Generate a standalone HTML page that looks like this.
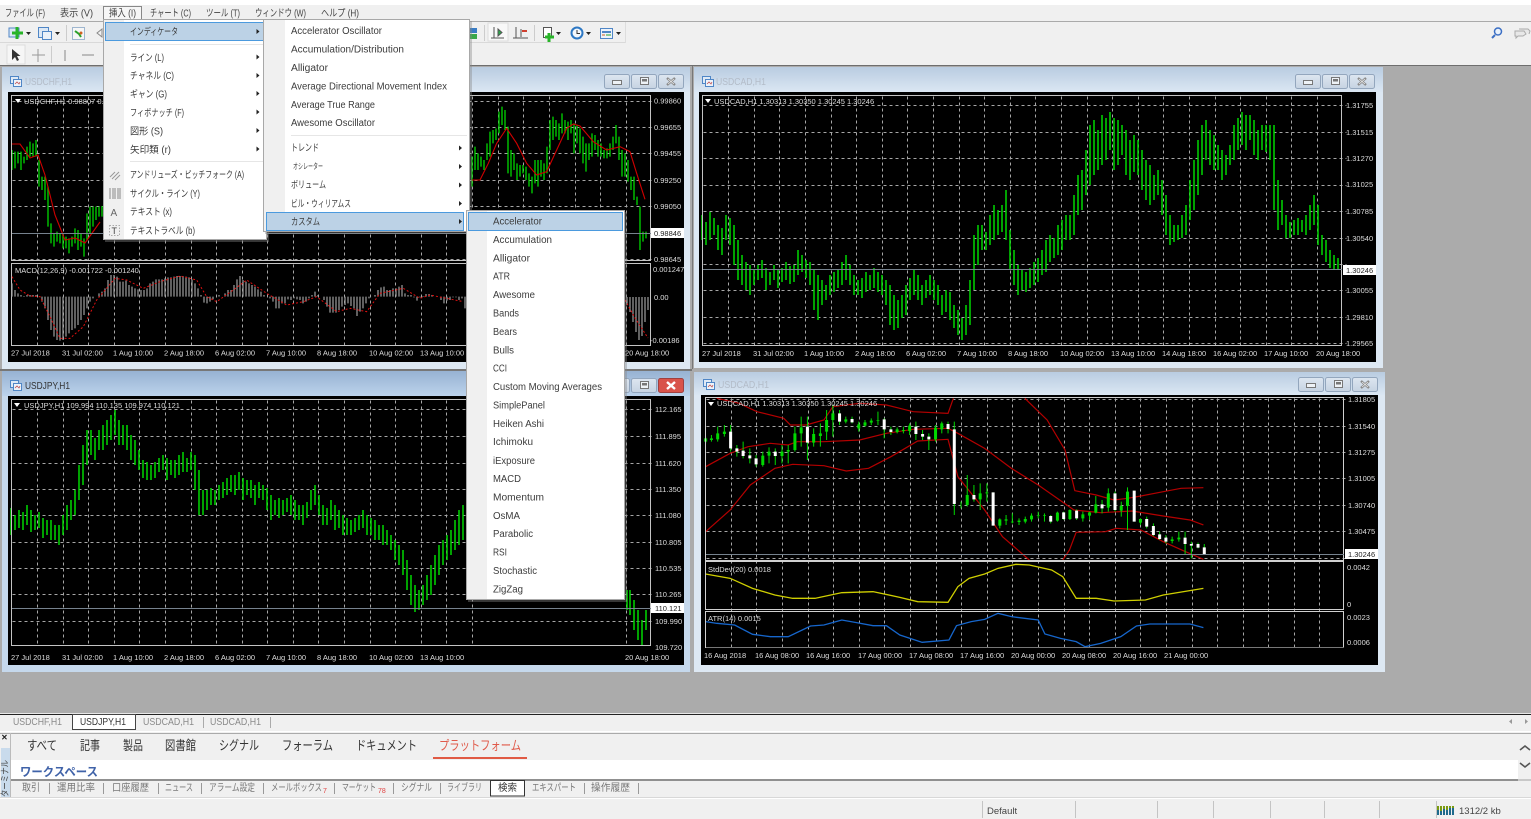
<!DOCTYPE html>
<html><head><meta charset="utf-8"><title>MetaTrader</title>
<style>
html,body{margin:0;padding:0;background:#f0f0f0;overflow:hidden}
svg{display:block;filter:blur(.35px);font-family:"Liberation Sans","Noto Sans CJK JP",sans-serif}
.v{vector-effect:non-scaling-stroke;fill:none}
.g{stroke:#a6a6a6;stroke-width:1;stroke-dasharray:3 3;fill:none}
.p{font-size:7.5px;fill:#ddd}
.mt{font-size:9.8px;fill:#3c3c3c}
.bt{font-size:10px;fill:#777}
.mb{font-size:10px;fill:#444}
.tt{font-size:13px;fill:#333}
.tl{font-size:10.5px;fill:#b3bcc8}
</style></head><body>
<svg xmlns="http://www.w3.org/2000/svg" width="1531" height="819" viewBox="0 0 1531 819">
<defs>
<linearGradient id="gi" x1="0" y1="0" x2="0" y2="1"><stop offset="0" stop-color="#b9cce1"/><stop offset="1" stop-color="#dbe7f3"/></linearGradient>
<linearGradient id="ga" x1="0" y1="0" x2="0" y2="1"><stop offset="0" stop-color="#97b2d2"/><stop offset="1" stop-color="#bcd3ec"/></linearGradient>
<linearGradient id="gb" x1="0" y1="0" x2="0" y2="1"><stop offset="0" stop-color="#dde6f0"/><stop offset="1" stop-color="#c6d3e2"/></linearGradient>
<g id="btn">
<rect x=".5" y=".5" width="25" height="14" rx="2" fill="url(#gb)" stroke="#93a6bd"/>
<rect x="8.5" y="6.5" width="9" height="4" fill="#eef2f6" stroke="#777"/>
<rect x="27.5" y=".5" width="25" height="14" rx="2" fill="url(#gb)" stroke="#93a6bd"/>
<rect x="36.5" y="3.5" width="8" height="7" fill="#eef2f6" stroke="#777"/><rect x="38" y="5" width="5" height="2.5" fill="#777"/>
</g>
<g id="cls">
<rect x="54.5" y=".5" width="25" height="14" rx="2" fill="url(#gb)" stroke="#93a6bd"/>
<path d="M63 4l8 7M71 4l-8 7" stroke="#8a8a8a" stroke-width="2.400" fill="none"/>
<path d="M64 5l6 5M70 5l-6 5" stroke="#f2f2f2" stroke-width=".7" fill="none"/>
</g>
<g id="ic"><rect x=".5" y=".5" width="8" height="7" fill="#dfeaf6" stroke="#4f86c6"/><rect x="3.5" y="3.5" width="8" height="7" fill="#eef4fb" stroke="#4f86c6"/><path d="M5 8l2-2 2 2 1-2" stroke="#c05050" fill="none" stroke-width=".8"/></g>
</defs>

<!-- top chrome -->
<rect width="1531" height="5" fill="#fff"/>
<rect y="5" width="1531" height="60" fill="#f0f0f0"/>
<rect y="21" width="1531" height="1" fill="#aaa"/>
<rect y="42" width="626" height="1" fill="#d9d9d9"/>
<rect x="625" y="22" width="1" height="21" fill="#ddd"/>
<rect y="65" width="1531" height="1" fill="#6e6e6e"/>

<!-- toolbar icons -->
<g>
<path d="M9 28h10v9h-10z" fill="#dce8f5" stroke="#4f86c6"/>
<path d="M17 27v12M12 33h11" stroke="#28b428" stroke-width="3" fill="none"/>
<path d="M26 32h5l-2.500 3z" fill="#222"/>
<rect x="38.500" y="27.500" width="10" height="10" fill="#dce8f5" stroke="#4f86c6"/><rect x="42.500" y="31.500" width="9" height="8" fill="#e9f0f8" stroke="#4f86c6"/>
<path d="M55 32h5l-2.500 3z" fill="#222"/>
<rect x="66" y="25" width="1" height="16" fill="#ccc"/>
<rect x="72.500" y="27.500" width="12" height="12" fill="#f6f6f6" stroke="#9fb6cf"/><path d="M75 31l4 3 2 3" stroke="#2aa02a" stroke-width="2" fill="none"/><circle cx="81" cy="33" r="1.500" fill="#d06020"/>
<path d="M97 33l5-4v8z" fill="none" stroke="#888"/>
<rect x="469" y="28" width="8" height="5" fill="#3a7cc4"/><rect x="469" y="34" width="8" height="5" fill="#3aa84a"/>
<rect x="484" y="25" width="1" height="16" fill="#ccc"/>
<rect x="488" y="23" width="20" height="18" fill="#f8f8f8" stroke="#ddd"/>
<path d="M494 27v11M491 38h13M498 29v7l4-3.500z" stroke="#555" fill="#2aa84a" stroke-width="1"/>
<path d="M516 27v11M513 38h15M521 29v8" stroke="#555" fill="none"/><path d="M522 31h5" stroke="#d04030" stroke-width="2"/>
<rect x="534" y="25" width="1" height="16" fill="#ccc"/>
<rect x="543.500" y="27.500" width="8" height="10" fill="#fff" stroke="#555"/>
<path d="M549 33v9M545 37h9" stroke="#28b428" stroke-width="3"/>
<path d="M556 32h5l-2.500 3z" fill="#222"/>
<circle cx="577" cy="33" r="5.500" fill="#f4f8fc" stroke="#2d78c4" stroke-width="2"/><path d="M577 30v3.500h3" stroke="#333" fill="none"/>
<path d="M586 32h5l-2.500 3z" fill="#222"/>
<rect x="600.500" y="28.500" width="12" height="10" fill="#eef3fa" stroke="#4f86c6"/><path d="M602 32h9" stroke="#4f86c6" stroke-width="2"/><path d="M602 35h3" stroke="#d06020"/><path d="M606 35h5" stroke="#28a028"/>
<path d="M616 32h5l-2.500 3z" fill="#222"/>
<circle cx="1498" cy="31.500" r="3.500" fill="#eaf2fb" stroke="#3c6fc4" stroke-width="1.500"/><path d="M1495 35l-3 3" stroke="#3c6fc4" stroke-width="2"/>
<path d="M1515 31h9l2 3-3 2h-5l-2 2v-2h-1zM1519 29h9l2 2-1 3" fill="#e8e8e8" stroke="#aaa"/>
<rect x="7" y="45" width="18" height="19" fill="#f6f6f6" stroke="#ddd"/>
<path d="M12 49v11l3-3 2 4 2-1-2-4h3.500z" fill="#333"/>
<path d="M38 49v13M32 55h13" stroke="#999"/><rect x="51" y="46" width="1" height="17" fill="#ccc"/>
<path d="M65 50v11" stroke="#888"/><path d="M82 55h12" stroke="#888"/>
</g>

<!-- menu bar -->
<g class="mb">
<text x="5" y="16.500" textLength="40" lengthAdjust="spacingAndGlyphs">ファイル (F)</text>
<text x="60" y="16.500" textLength="33" lengthAdjust="spacingAndGlyphs">表示 (V)</text>
<rect x="103.500" y="6.500" width="38" height="14" fill="#f6f6f6" stroke="#888"/>
<text x="109" y="16.500" textLength="27" lengthAdjust="spacingAndGlyphs">挿入 (I)</text>
<text x="150" y="16.500" textLength="41" lengthAdjust="spacingAndGlyphs">チャート (C)</text>
<text x="206" y="16.500" textLength="34" lengthAdjust="spacingAndGlyphs">ツール (T)</text>
<text x="255" y="16.500" textLength="51" lengthAdjust="spacingAndGlyphs">ウィンドウ (W)</text>
<text x="321" y="16.500" textLength="38" lengthAdjust="spacingAndGlyphs">ヘルプ (H)</text>
</g>

<!-- MDI background -->
<rect y="66" width="1531" height="647" fill="#ababab"/>

<!-- Window 1 USDCHF -->
<rect x="2" y="67" width="688" height="302" fill="#dde8f3"/>
<rect x="2" y="67" width="688" height="25" fill="url(#gi)"/>
<use href="#ic" x="10" y="76"/>
<text class="tl" x="25" y="85" textLength="47" lengthAdjust="spacingAndGlyphs">USDCHF,H1</text>
<use href="#btn" x="604" y="74"/><use href="#cls" x="604" y="74"/>
<rect x="8" y="92" width="676" height="270" fill="#000"/>
<g transform="translate(.5 .5)">
<path class="g" d="M37 96V260M63 96V260M88 96V260M114 96V260M139 96V260M165 96V260M191 96V260M216 96V260M242 96V260M267 96V260M293 96V260M318 96V260M344 96V260M370 96V260M395 96V260M421 96V260M446 96V260M472 96V260M498 96V260M523 96V260M549 96V260M575 96V260M600 96V260M626 96V260"/>
<path class="g" d="M37 264V345M63 264V345M88 264V345M114 264V345M139 264V345M165 264V345M191 264V345M216 264V345M242 264V345M267 264V345M293 264V345M318 264V345M344 264V345M370 264V345M395 264V345M421 264V345M446 264V345M472 264V345M498 264V345M523 264V345M549 264V345M575 264V345M600 264V345M626 264V345"/>
<path class="g" d="M12 101H654M12 127H654M12 153H654M12 180H654M12 206H654M12 259H654"/>
</g>
<g transform="scale(.33333)">
<path class="v" stroke="#00d800" stroke-width="1.300" d="M36 450V510M45 455V505M54 455V490M63 455V510M72 470V490M81 440V480M90 425V470M99 430V470M108 420V470M117 480V560M126 530V570M135 530V600M144 560V680M153 670V730M162 700V740M171 695V725M180 700V730M189 700V745M198 710V745M207 715V760M216 710V740M225 685V730M234 690V750M243 700V740M252 715V770M261 640V720M270 620V700M279 620V680M288 620V660M297 620V650M306 618V650"/>
</g>
<g transform="translate(460 0) scale(.33333)">
<path class="v" stroke="#00d800" stroke-width="1.300" d="M36 470V560M45 440V510M54 460V510M63 470V500M72 480V510M81 430V480M90 395V470M99 390V430M108 385V420M117 335V400M126 320V375M135 330V390M144 380V520M153 450V530M162 460V510M171 490V540M180 495V530M189 495V520M198 500V540M207 520V560M216 530V580M225 480V550M234 480V560M243 480V530M252 490V540M261 440V520M270 360V450M279 350V420M288 360V410M297 370V420M306 340V400M315 360V400M324 365V420M333 360V400M342 370V460M351 375V430M360 385V460M369 410V490M378 430V515M387 430V480M396 400V470M405 405V450M414 420V470M423 430V470M432 450V475M441 445V475M450 430V470M459 410V450M468 375V430M477 410V480M486 450V530M495 460V530M504 480V545M513 530V570M522 530V600M531 590V615M540 620V750M549 695V725M558 695V715"/>
<polyline class="v" stroke="#d00000" stroke-width="1.100" points="35,540 60,540 85,490 110,430 140,385 170,430 200,490 230,525 260,515 290,450 320,385 340,372 360,378 400,425 440,450 480,440 510,455 530,520 555,598"/>
</g>
<polyline fill="none" stroke="#d00000" stroke-width="1.100" points="11,144 20,144 30,158 38,155 45,175 55,215 65,240 75,238 85,243 100,222"/>
<rect x="11.500" y="95.500" width="639" height="165" fill="none" stroke="#c4c4c4"/>
<rect x="11.500" y="263.500" width="639" height="82" fill="none" stroke="#c4c4c4"/>
<path d="M12 233.500H651" stroke="#76828e"/>
<path d="M15 99l6 0-3 4z" fill="#fff"/>
<text class="p" x="24" y="104">USDCHF,H1  0.98807 0.98860 0.98789 0.98846</text>
<g transform="translate(0 240) scale(.33333)">
<path class="v" stroke="#a0a0a0" stroke-width="1.200" d="M36 170V130M45 170V150M54 170V160M63 170V165M72 170V168M81 170V165M90 170V165M99 170V165M108 170V165M126 170V185M135 170V205M144 170V240M153 170V270M162 170V290M171 170V300M180 170V302M189 170V300M198 170V290M207 170V280M216 170V270M225 170V265M234 170V255M243 170V240M252 170V225M261 170V205M270 170V185M279 170V175M297 170V160M306 170V155M315 170V145M324 170V120M333 170V105M342 170V105M351 170V110M360 170V125M369 170V125M378 170V122M387 170V135M396 170V140M405 170V145M414 170V148M423 170V150M432 170V150M441 170V145M450 170V130M459 170V125M468 170V118M477 170V118M486 170V118M495 170V115M504 170V112M513 170V112M522 170V110M531 170V108M540 170V108M549 170V108M558 170V110M567 170V112M576 170V118M585 170V130M594 170V145M603 170V165M612 170V188M621 170V190M630 170V185M639 170V178M657 170V165M675 170V160M684 170V150M693 170V150M702 170V135M711 170V118M720 170V108M729 170V120M738 170V125M747 170V130M756 170V135M765 170V140M774 170V148M783 170V155M792 170V165M810 170V175M819 170V185M828 170V205M837 170V205M846 170V190M855 170V190M864 170V178M873 170V180M882 170V175M891 170V178M900 170V180M909 170V190M918 170V185M927 170V175M936 170V165M945 170V155M954 170V165M972 170V180M981 170V200M990 170V218M999 170V218M1008 170V218M1017 170V210M1026 170V200M1035 170V195M1044 170V190M1053 170V198M1062 170V205M1071 170V228M1080 170V215M1089 170V205M1098 170V190M1107 170V175M1125 170V165M1134 170V150M1143 170V142M1152 170V140M1161 170V150M1170 170V150M1179 170V145M1188 170V145M1197 170V140M1206 170V135M1215 170V160M1224 170V165M1233 170V165M1242 170V172M1251 170V182M1260 170V172M1269 170V168M1278 170V162M1287 170V162M1296 170V165M1314 170V170M1323 170V180M1332 170V190M1341 170V182M1350 170V180M1359 170V172M1368 170V172M1377 170V180M1386 170V175M1395 170V205"/>
<polyline class="v" stroke="#e01010" stroke-width="1" stroke-dasharray="2 2" points="36,110 60,150 90,168 120,170 150,230 180,295 210,295 250,260 290,180 345,115 380,120 430,145 480,125 540,108 590,120 620,170 650,185 700,150 740,120 800,160 860,195 910,185 950,170 1010,215 1050,205 1100,215 1140,160 1210,145 1260,175 1290,165 1390,185"/>
</g>
<path d="M627 297V305M630 297V312M633 297V322M636 297V332M639 297V340M642 297V336M645 297V322M648 297V310" stroke="#a0a0a0" stroke-width="1.200"/>
<polyline fill="none" stroke="#e01010" stroke-dasharray="2 2" points="625,300 635,318 648,338"/>
<text class="p" x="15" y="273" fill="#ccc">MACD(12,26,9) -0.001722 -0.001240</text>
<g class="p">
<text x="654" y="103.500">0.99860</text><text x="654" y="130">0.99655</text><text x="654" y="156">0.99455</text><text x="654" y="183">0.99250</text><text x="654" y="209">0.99050</text><text x="654" y="262">0.98645</text>
<text x="653" y="272">0.001247</text><text x="654" y="300">0.00</text><text x="650" y="343">-0.00186</text>
<text x="11" y="355.500">27 Jul 2018</text><text x="62" y="355.500">31 Jul 02:00</text><text x="113" y="355.500">1 Aug 10:00</text><text x="164" y="355.500">2 Aug 18:00</text><text x="215" y="355.500">6 Aug 02:00</text><text x="266" y="355.500">7 Aug 10:00</text><text x="317" y="355.500">8 Aug 18:00</text><text x="369" y="355.500">10 Aug 02:00</text><text x="420" y="355.500">13 Aug 10:00</text><text x="625" y="355.500">20 Aug 18:00</text>
</g>
<rect x="651" y="228" width="33" height="10" fill="#fff"/><text x="654" y="236" font-size="7.500" fill="#222">0.98846</text>

<!-- Window 2 USDJPY -->
<rect x="0" y="369" width="692" height="2" fill="#777"/>
<rect x="2" y="371" width="688" height="301" fill="#c5d8ec"/>
<rect x="2" y="371" width="688" height="25" fill="url(#ga)"/>
<use href="#ic" x="10" y="380"/>
<text x="25" y="389" font-size="10.500" fill="#333" textLength="45" lengthAdjust="spacingAndGlyphs">USDJPY,H1</text>
<use href="#btn" x="604" y="378"/>
<rect x="658.500" y="378.500" width="25" height="14" rx="2" fill="#d9534a" stroke="#a04040"/><path d="M667 382l8 7M675 382l-8 7" stroke="#fff" stroke-width="2.400"/>
<rect x="8" y="396" width="676" height="269" fill="#000"/>
<g transform="translate(.5 .5)">
<path class="g" d="M37 400V645M63 400V645M88 400V645M114 400V645M139 400V645M165 400V645M191 400V645M216 400V645M242 400V645M267 400V645M293 400V645M318 400V645M344 400V645M370 400V645M395 400V645M421 400V645M446 400V645M472 400V645M626 400V645"/>
<path class="g" d="M12 409H654M12 436H654M12 463H654M12 489H654M12 515H654M12 542H654M12 568H654M12 594H654M12 621H654"/>
</g>
<path fill="none" stroke="#00d800" stroke-width="1.500" d="M11 508V535M15 515V530M19 510V528M23 512V530M27 505V525M31 510V532M35 515V530M39 512V528M43 518V538M47 520V535M51 520V540M55 525V540M59 525V545M63 515V535M67 505V530M71 500V520M75 490V515M79 465V500M83 445V485M87 430V465M91 430V455M95 438V460M99 430V450M103 425V450M107 420V445M111 415V440M115 410V435M119 420V445M123 425V445M127 425V450M131 435V460M135 440V465M139 450V470M143 460V478M147 462V480M151 465V480M155 462V478M159 458V472M163 455V470M167 458V480M171 460V475M175 460V478M179 455V475M183 452V472M187 458V472M191 452V470M195 455V490M199 470V515M203 490V515M207 490V510M211 488V505M215 490V505M219 485V500M223 482V498M227 478V495M231 475V492M235 475V495M239 472V490M243 478V500M247 480V495M251 480V498M255 485V505M259 482V498M263 485V500M267 488V510M271 495V520M275 500V515M279 498V518M283 500V515M287 498V512M291 495V515M295 500V520M299 505V520M303 505V525M307 502V518M311 490V510M315 485V505M319 495V515M323 505V525M327 508V525M331 500V520M335 505V530M339 510V528M343 515V535M347 518V535M351 520V535M355 518V532M359 515V530M363 510V528M367 515V535M371 518V535M375 520V540M379 525V540M383 525V545M387 530V545M391 535V550M395 540V560M399 545V565M403 550V575M407 560V590M411 575V605M415 585V612M419 590V610M423 585V605M427 575V600M431 565V595M435 555V585M439 545V575M443 540V565M447 535V560M451 530V555M455 520V550M459 510V545M463 505V540M627 590V610M630 590V615M634 600V630M638 610V640M642 620V645M646 610V630"/>
<rect x="11.500" y="399.500" width="639" height="246" fill="none" stroke="#c4c4c4"/>
<path d="M12 608.500H651" stroke="#76828e"/>
<path d="M14 403l6 0-3 4z" fill="#fff"/>
<text class="p" x="24" y="408">USDJPY,H1  109.994 110.135 109.974 110.121</text>
<g class="p">
<text x="655" y="412">112.165</text><text x="655" y="439">111.895</text><text x="655" y="466">111.620</text><text x="655" y="492">111.350</text><text x="655" y="518">111.080</text><text x="655" y="545">110.805</text><text x="655" y="571">110.535</text><text x="655" y="597">110.265</text><text x="655" y="624">109.990</text><text x="655" y="650">109.720</text>
<text x="11" y="660">27 Jul 2018</text><text x="62" y="660">31 Jul 02:00</text><text x="113" y="660">1 Aug 10:00</text><text x="164" y="660">2 Aug 18:00</text><text x="215" y="660">6 Aug 02:00</text><text x="266" y="660">7 Aug 10:00</text><text x="317" y="660">8 Aug 18:00</text><text x="369" y="660">10 Aug 02:00</text><text x="420" y="660">13 Aug 10:00</text><text x="625" y="660">20 Aug 18:00</text>
</g>
<rect x="651" y="603" width="33" height="10" fill="#fff"/><text x="655" y="611" font-size="7.500" fill="#222">110.121</text>

<!-- Window 3 USDCAD -->
<rect x="692" y="66" width="1" height="303" fill="#777"/>
<rect x="694" y="67" width="689" height="301" fill="#dde8f3"/>
<rect x="694" y="67" width="689" height="25" fill="url(#gi)"/>
<use href="#ic" x="702" y="76"/>
<text class="tl" x="716" y="85" textLength="50" lengthAdjust="spacingAndGlyphs">USDCAD,H1</text>
<use href="#btn" x="1295" y="74"/><use href="#cls" x="1295" y="74"/>
<rect x="699" y="92" width="677" height="270" fill="#000"/>
<g transform="translate(.5 .5)">
<path class="g" d="M728 96V345M754 96V345M779 96V345M805 96V345M831 96V345M856 96V345M882 96V345M907 96V345M933 96V345M959 96V345M984 96V345M1010 96V345M1035 96V345M1061 96V345M1087 96V345M1112 96V345M1138 96V345M1163 96V345M1189 96V345M1215 96V345M1240 96V345M1266 96V345M1291 96V345M1317 96V345"/>
<path class="g" d="M703 105H1346M703 132H1346M703 158H1346M703 185H1346M703 211H1346M703 238H1346M703 264H1346M703 290H1346M703 317H1346M703 343H1346"/>
</g>
<path fill="none" stroke="#00d800" stroke-width="1.500" d="M702 215V240M706 222V245M710 212V240M714 218V235M718 225V250M722 228V255M726 215V240M730 218V245M734 225V265M738 240V280M742 255V285M746 262V290M750 265V295M754 270V285M758 265V280M762 260V278M766 268V290M770 272V285M774 265V280M778 270V288M782 268V282M786 262V280M790 266V284M794 265V282M798 250V275M802 255V272M806 260V278M810 262V285M814 270V310M818 275V320M822 280V305M826 285V300M830 275V295M834 272V292M838 270V288M842 262V285M846 255V280M850 265V285M854 275V295M858 280V295M862 278V298M866 272V292M870 275V290M874 268V288M878 272V292M882 275V295M886 280V305M890 285V325M894 295V330M898 300V328M902 295V318M906 285V315M910 278V300M914 270V295M918 275V300M922 285V305M926 280V298M930 275V295M934 280V300M938 285V305M942 295V315M946 290V312M950 292V320M954 305V328M958 310V335M962 318V340M966 305V335M970 280V325M974 235V290M978 225V265M982 225V250M986 232V250M990 215V245M994 205V240M998 210V235M1002 205V232M1006 190V240M1010 230V270M1014 250V285M1018 265V295M1022 270V290M1026 272V292M1030 268V288M1034 262V285M1038 258V282M1042 250V275M1046 240V272M1050 235V262M1054 238V258M1058 225V255M1062 220V250M1066 215V240M1070 215V240M1074 195V235M1078 175V215M1082 170V210M1086 150V195M1090 125V185M1094 120V175M1098 130V170M1102 115V165M1106 118V160M1110 112V150M1114 118V170M1118 120V165M1122 125V155M1126 130V175M1130 140V180M1134 135V172M1138 140V175M1142 150V190M1146 160V200M1150 165V205M1154 175V200M1158 170V195M1162 180V215M1166 195V235M1170 215V245M1174 225V242M1178 225V240M1182 215V238M1186 205V235M1190 180V220M1194 160V210M1198 140V195M1202 125V175M1206 120V160M1210 130V165M1214 135V170M1218 145V170M1222 150V180M1226 155V175M1230 145V165M1234 125V160M1238 118V150M1242 112V145M1246 115V150M1250 115V140M1254 120V155M1258 130V160M1262 125V150M1266 125V152M1270 125V160M1274 125V210M1278 180V230M1282 200V225M1286 215V238M1290 222V238M1294 220V235M1298 218V235M1302 220V232M1306 215V235M1310 205V230M1314 195V225M1318 205V245M1322 235V255M1326 240V262M1330 250V268M1334 255V270M1338 258V270"/>
<rect x="702.500" y="95.500" width="639" height="250" fill="none" stroke="#c4c4c4"/>
<path d="M703 269.500H1342" stroke="#76828e"/>
<path d="M705 99l6 0-3 4z" fill="#fff"/>
<text class="p" x="714" y="104">USDCAD,H1  1.30313 1.30350 1.30245 1.30246</text>
<g class="p">
<text x="1346" y="108">1.31755</text><text x="1346" y="135">1.31515</text><text x="1346" y="161">1.31270</text><text x="1346" y="187">1.31025</text><text x="1346" y="214">1.30785</text><text x="1346" y="241">1.30540</text><text x="1346" y="293">1.30055</text><text x="1346" y="320">1.29810</text><text x="1346" y="346">1.29565</text>
<text x="702" y="356">27 Jul 2018</text><text x="753" y="356">31 Jul 02:00</text><text x="804" y="356">1 Aug 10:00</text><text x="855" y="356">2 Aug 18:00</text><text x="906" y="356">6 Aug 02:00</text><text x="957" y="356">7 Aug 10:00</text><text x="1008" y="356">8 Aug 18:00</text><text x="1060" y="356">10 Aug 02:00</text><text x="1111" y="356">13 Aug 10:00</text><text x="1162" y="356">14 Aug 18:00</text><text x="1213" y="356">16 Aug 02:00</text><text x="1264" y="356">17 Aug 10:00</text><text x="1316" y="356">20 Aug 18:00</text>
</g>
<rect x="1343" y="265" width="33" height="10" fill="#fff"/><text x="1346" y="273" font-size="7.500" fill="#222">1.30246</text>

<!-- Window 4 USDCAD -->
<rect x="694" y="372" width="691" height="300" fill="#dde8f3"/>
<rect x="694" y="372" width="691" height="23" fill="url(#gi)"/>
<use href="#ic" x="703" y="379"/>
<text class="tl" x="718" y="388" textLength="51" lengthAdjust="spacingAndGlyphs">USDCAD,H1</text>
<use href="#btn" x="1298" y="377"/><use href="#cls" x="1298" y="377"/>
<rect x="701" y="395" width="677" height="270" fill="#000"/>
<g transform="translate(.5 .5)">
<path class="g" d="M731 398V647M756 398V647M782 398V647M808 398V647M833 398V647M859 398V647M884 398V647M910 398V647M936 398V647M961 398V647M987 398V647M1012 398V647M1038 398V647M1064 398V647M1089 398V647M1115 398V647M1140 398V647M1166 398V647M1192 398V647M1217 398V647M1243 398V647M1268 398V647M1294 398V647M1319 398V647"/>
<path class="g" d="M706 399H1348M706 426H1348M706 452H1348M706 478H1348M706 505H1348M706 531H1348M706 558H1348"/>
</g>
<g transform="translate(690 370) scale(.44643 .33333)">
<path class="v" stroke="#b40000" stroke-width="1.200" d="M60 85L110 100 150 125 210 145 225 165 260 165 300 150 320 110 380 100 440 105 500 125 578 130 590 85M750 85L800 150 840 240 862 362 910 375 950 390 980 385 1010 378 1060 365 1100 355 1150 353"/>
<path class="v" stroke="#b40000" stroke-width="1.200" d="M35 290L90 250 130 230 180 220 220 225 240 215 300 215 380 210 440 190 500 178 578 175 600 190 660 235 720 295 780 345 860 420 920 428 990 423 1060 438 1120 450 1150 465"/>
<path class="v" stroke="#b40000" stroke-width="1.200" d="M35 485L90 420 135 345 190 295 230 283 300 287 350 303 400 295 450 260 510 213 578 208 600 320 660 420 700 500 760 570M835 570L850 540 865 487 930 485 955 475 1010 480 1060 515 1110 545 1150 568"/>
<path class="v" stroke="#00d800" stroke-width="1" d="M35 200V220M48 195V215M62 170V215M77 165V200M91 165V245M105 225V260M119 215V265M134 235V280M148 255V290M163 245V290M177 232V280M191 235V285M206 225V280M220 225V280M235 170V245M249 140V230M263 140V270M277 175V230M292 160V230M306 120V210M320 105V200M335 120V165M349 140V160M363 140V160M378 155V185M392 150V170M406 145V165M421 125V165M435 145V205M450 170V195M464 172V190M478 170V190M492 160V195M506 155V210M521 180V210M535 190V240M550 165V215M564 155V190M578 155V190M592 155V435M607 395V415M621 315V410M636 345V395M650 340V420M665 340V395M679 367V467M694 445V475M708 435V465M722 430V460M737 445V465M751 440V460M765 430V455M780 425V445M794 430V455M808 435V460M823 425V455M837 425V450M851 418V450M866 418V450M880 425V455M895 425V450M909 378V430M923 390V430M937 355V425M952 365V425M966 395V440M980 352V480M995 362V455M1009 445V465M1023 440V475M1038 460V498M1052 485V510M1066 495V520M1080 500V520M1095 485V515M1109 485V555M1123 515V565M1138 518V535M1152 522V555"/>
<path class="v" stroke="#00d800" stroke-width="3" d="M35 205V215M48 205V210M62 190V208M77 185V192M163 257V285M177 245V257M206 245V258M220 240V245M235 190V240M249 172V190M277 192V218M292 190V198M306 150V185M320 130V150M349 148V155M378 163V175M392 157V167M406 152V158M421 150V152M464 178V186M478 180V183M492 167V183M550 173V208M564 160V178M621 375V405M650 370V388M665 367V370M694 448V467M708 448V452M722 455V457M737 452V456M751 447V455M765 437V448M780 435V437M794 435V437M823 428V452M851 420V447M880 433V445M895 427V437M909 403V428M937 370V413M966 408V422M980 365V408M1009 447V458M1080 508V513M1095 503V508"/>
<path class="v" stroke="#fff" stroke-width="3" d="M91 185V235M105 235V245M119 242V258M134 256V265M148 265V283M191 245V258M263 170V218M335 130V155M363 147V157M435 148V178M450 178V186M506 170V192M521 192V200M535 200V208M578 162V177M592 178V402M636 375V388M679 367V467M808 438V455M837 427V447M866 422V445M923 403V415M952 370V420M995 362V455M1023 447V470M1038 468V495M1052 493V507M1066 503V515M1109 503V522M1123 522V527M1138 522V533M1152 532V552"/>
<polyline class="v" stroke="#cfcf00" stroke-width="1.300" points="35,612 60,618 90,625 140,655 190,675 230,685 280,685 340,668 410,665 470,682 510,695 578,697 600,650 625,625 660,612 690,595 730,583 760,585 810,600 835,620 865,685 910,685 950,693 1020,690 1060,675 1150,655"/>
<polyline class="v" stroke="#1666cc" stroke-width="1.300" points="35,755 60,760 100,765 140,793 180,800 220,800 270,768 300,765 340,750 370,757 410,767 440,767 470,795 520,817 580,810 597,767 630,755 660,748 690,730 720,740 780,750 795,792 830,805 865,815 885,830 920,820 965,800 1000,768 1030,762 1120,762 1150,773"/>
</g>
<rect x="705.500" y="397.500" width="638" height="163" fill="none" stroke="#d0d0d0"/>
<rect x="705.500" y="561.500" width="638" height="48" fill="none" stroke="#d0d0d0"/>
<rect x="705.500" y="611.500" width="638" height="36" fill="none" stroke="#d0d0d0"/>
<path d="M706 647.500H1344" stroke="#777"/>
<path d="M706 554.500H1344" stroke="#76828e"/>
<path d="M708 402l6 0-3 4z" fill="#fff"/>
<text class="p" x="717" y="406">USDCAD,H1  1.30313 1.30350 1.30245 1.30246</text>
<text class="p" x="708" y="572">StdDev(20) 0.0018</text>
<text class="p" x="708" y="621">ATR(14) 0.0015</text>
<g class="p">
<text x="1348" y="402">1.31805</text><text x="1348" y="429">1.31540</text><text x="1348" y="455">1.31275</text><text x="1348" y="481">1.31005</text><text x="1348" y="508">1.30740</text><text x="1348" y="534">1.30475</text>
<text x="1347" y="570">0.0042</text><text x="1347" y="607">0</text><text x="1347" y="620">0.0023</text><text x="1347" y="645">0.0006</text>
<text x="704" y="658">16 Aug 2018</text><text x="755" y="658">16 Aug 08:00</text><text x="806" y="658">16 Aug 16:00</text><text x="858" y="658">17 Aug 00:00</text><text x="909" y="658">17 Aug 08:00</text><text x="960" y="658">17 Aug 16:00</text><text x="1011" y="658">20 Aug 00:00</text><text x="1062" y="658">20 Aug 08:00</text><text x="1113" y="658">20 Aug 16:00</text><text x="1164" y="658">21 Aug 00:00</text>
</g>
<rect x="1345" y="549" width="33" height="10" fill="#fff"/><text x="1348" y="557" font-size="7.500" fill="#222">1.30246</text>

<!-- chart tab bar -->
<rect y="713" width="1531" height="106" fill="#f0f0f0"/>
<rect y="713" width="1531" height="1" fill="#e8e8e8"/>
<rect y="714" width="1531" height="1" fill="#222"/>
<rect y="731" width="1531" height="1" fill="#fff"/>
<rect x="72.500" y="714.500" width="63" height="15" fill="#fff" stroke="#444"/>
<g font-size="10" fill="#8a8a8a">
<text x="13" y="725" textLength="49" lengthAdjust="spacingAndGlyphs">USDCHF,H1</text>
<text x="80" y="725" fill="#333" textLength="46" lengthAdjust="spacingAndGlyphs">USDJPY,H1</text>
<text x="143" y="725" textLength="51" lengthAdjust="spacingAndGlyphs">USDCAD,H1</text>
<text x="210" y="725" textLength="51" lengthAdjust="spacingAndGlyphs">USDCAD,H1</text>
</g>
<path d="M203.500 717v11M270.500 717v11" stroke="#aaa"/>
<path d="M1512 719l-3 2.500 3 2.500zM1525 719l3 2.500-3 2.500z" fill="#999"/>

<!-- terminal -->
<rect y="733" width="1531" height="1" fill="#aaa"/>
<rect x="1" y="734" width="10" height="63" fill="#f0f0f0"/>
<rect x="1" y="748" width="9" height="49" fill="#c9dbec"/>
<rect x="10" y="733" width="1" height="64" fill="#bbb"/>
<text x="1.500" y="740.500" font-size="10" font-weight="bold" fill="#222">×</text>
<text transform="translate(8 797) rotate(-90)" font-size="9" fill="#444" textLength="37" lengthAdjust="spacingAndGlyphs">ターミナル</text>
<rect x="11" y="760" width="1507" height="19" fill="#fff"/>
<g class="tt">
<text x="27" y="750" textLength="30" lengthAdjust="spacingAndGlyphs">すべて</text>
<text x="80" y="750" textLength="20" lengthAdjust="spacingAndGlyphs">記事</text>
<text x="123" y="750" textLength="20" lengthAdjust="spacingAndGlyphs">製品</text>
<text x="165" y="750" textLength="31" lengthAdjust="spacingAndGlyphs">図書館</text>
<text x="219" y="750" textLength="40" lengthAdjust="spacingAndGlyphs">シグナル</text>
<text x="282" y="750" textLength="51" lengthAdjust="spacingAndGlyphs">フォーラム</text>
<text x="356" y="750" textLength="61" lengthAdjust="spacingAndGlyphs">ドキュメント</text>
<text x="439" y="750" fill="#e05a4a" textLength="82" lengthAdjust="spacingAndGlyphs">プラットフォーム</text>
</g>
<rect x="433" y="757" width="94" height="2" fill="#e05a44"/>
<text x="20" y="776" font-size="12" font-weight="bold" fill="#3f62a8" textLength="78" lengthAdjust="spacingAndGlyphs">ワークスペース</text>
<path d="M1520 750l5-4 5 4" fill="none" stroke="#555" stroke-width="1.600"/>
<path d="M1520 763l5 4 5-4" fill="none" stroke="#555" stroke-width="1.600"/>
<rect x="11" y="779" width="1507" height="2" fill="#909090"/>
<rect x="1518" y="779" width="13" height="2" fill="#c8c8c8"/>
<rect x="490.500" y="780.500" width="34" height="15.500" fill="#fff" stroke="#333"/>
<g class="bt">
<text x="22" y="791" textLength="18" lengthAdjust="spacingAndGlyphs">取引</text>
<text x="57" y="791" textLength="38" lengthAdjust="spacingAndGlyphs">運用比率</text>
<text x="112" y="791" textLength="37" lengthAdjust="spacingAndGlyphs">口座履歴</text>
<text x="165" y="791" textLength="28" lengthAdjust="spacingAndGlyphs">ニュース</text>
<text x="209" y="791" textLength="46" lengthAdjust="spacingAndGlyphs">アラーム設定</text>
<text x="271" y="791" textLength="51" lengthAdjust="spacingAndGlyphs">メールボックス</text>
<text x="323" y="793" font-size="7" fill="#e04040">7</text>
<text x="342" y="791" textLength="34" lengthAdjust="spacingAndGlyphs">マーケット</text>
<text x="378" y="793" font-size="7" fill="#e04040">78</text>
<text x="401" y="791" textLength="31" lengthAdjust="spacingAndGlyphs">シグナル</text>
<text x="447" y="791" textLength="35" lengthAdjust="spacingAndGlyphs">ライブラリ</text>
<text x="498" y="791" fill="#333" textLength="19" lengthAdjust="spacingAndGlyphs">検索</text>
<text x="532" y="791" textLength="44" lengthAdjust="spacingAndGlyphs">エキスパート</text>
<text x="591" y="791" textLength="39" lengthAdjust="spacingAndGlyphs">操作履歴</text>
</g>
<path d="M49.500 783v11M103.500 783v11M158.500 783v11M201.500 783v11M263.500 783v11M334.500 783v11M393.500 783v11M440.500 783v11M584.500 783v11M638.500 783v11" stroke="#999"/>

<!-- status bar -->
<rect y="797" width="1531" height="1" fill="#d8d8d8"/>
<rect y="798" width="1531" height="1" fill="#fff"/>
<path d="M982.500 801v17M1075.500 801v17M1157.500 801v17M1213.500 801v17M1270.500 801v17M1324.500 801v17M1379.500 801v17M1436.500 801v17" stroke="#c4c4c4"/>
<text x="987" y="814" font-size="9.500" fill="#444">Default</text>
<text x="1459" y="814" font-size="9.500" fill="#444">1312/2 kb</text>
<path d="M1438 806v9M1441 806v9M1444 806v9M1447 806v9M1450 806v9M1453 806v9" stroke="#1e6a8c" stroke-width="2"/>
<path d="M1438 806v4M1441 806v5M1444 806v3M1447 806v4M1450 806v2M1453 806v2" stroke="#7a9a10" stroke-width="2"/>

<!-- menu 1 -->
<rect x="105" y="21" width="164" height="221" fill="#888" opacity=".4"/>
<rect x="103.500" y="19.500" width="163" height="220" fill="#fff" stroke="#a8a8a8"/>
<rect x="104" y="20" width="20" height="219" fill="#f0f0f0"/>
<rect x="105.500" y="22.500" width="158" height="18" fill="#bcd2e6" stroke="#4b9ade"/>
<rect x="130" y="44" width="134" height="1" fill="#e6e6e6"/>
<rect x="130" y="161" width="134" height="1" fill="#e6e6e6"/>
<g class="mt">
<text x="130" y="35" textLength="48" lengthAdjust="spacingAndGlyphs">インディケータ</text>
<text x="130" y="61" textLength="34" lengthAdjust="spacingAndGlyphs">ライン (L)</text>
<text x="130" y="79" textLength="44" lengthAdjust="spacingAndGlyphs">チャネル (C)</text>
<text x="130" y="97.500" textLength="37" lengthAdjust="spacingAndGlyphs">ギャン (G)</text>
<text x="130" y="116" textLength="54" lengthAdjust="spacingAndGlyphs">フィボナッチ (F)</text>
<text x="130" y="134.500" textLength="33" lengthAdjust="spacingAndGlyphs">図形 (S)</text>
<text x="130" y="153" textLength="41" lengthAdjust="spacingAndGlyphs">矢印類 (r)</text>
<text x="130" y="178" textLength="114" lengthAdjust="spacingAndGlyphs">アンドリューズ・ピッチフォーク (A)</text>
<text x="130" y="197" textLength="70" lengthAdjust="spacingAndGlyphs">サイクル・ライン (Y)</text>
<text x="130" y="215" textLength="42" lengthAdjust="spacingAndGlyphs">テキスト (x)</text>
<text x="130" y="234" textLength="65" lengthAdjust="spacingAndGlyphs">テキストラベル (b)</text>
</g>
<path d="M256.500 29l3 2.500-3 2.500zM256.500 54.500l3 2.500-3 2.500zM256.500 73l3 2.500-3 2.500zM256.500 91l3 2.500-3 2.500zM256.500 109.500l3 2.500-3 2.500zM256.500 128l3 2.500-3 2.500zM256.500 146.500l3 2.500-3 2.500z" fill="#222"/>
<path d="M110 177l5-5M112 179l7-7M115 180l5-5" stroke="#999" fill="none"/>
<path d="M110 188v11M113 188v11M115 188v11M118 188v11M120 188v11" stroke="#888" fill="none"/>
<text x="110.500" y="216" font-size="10" fill="#666">A</text>
<rect x="109.500" y="225.500" width="10" height="10" fill="none" stroke="#aaa" stroke-dasharray="1.500 1.500"/>
<text x="111.500" y="234" font-size="9" fill="#444">T</text>

<!-- menu 2 -->
<rect x="265" y="21" width="207" height="213" fill="#888" opacity=".4"/>
<rect x="263.500" y="19.500" width="206" height="212" fill="#fff" stroke="#a8a8a8"/>
<rect x="264" y="20" width="21" height="211" fill="#f0f0f0"/>
<rect x="291" y="135" width="176" height="1" fill="#e6e6e6"/>
<rect x="266.500" y="212.500" width="197" height="18" fill="#bcd2e6" stroke="#4b9ade"/>
<g class="mt">
<text x="291" y="34" textLength="91" lengthAdjust="spacingAndGlyphs">Accelerator Oscillator</text>
<text x="291" y="52.500" textLength="113" lengthAdjust="spacingAndGlyphs">Accumulation/Distribution</text>
<text x="291" y="71" textLength="37" lengthAdjust="spacingAndGlyphs">Alligator</text>
<text x="291" y="89.500" textLength="156" lengthAdjust="spacingAndGlyphs">Average Directional Movement Index</text>
<text x="291" y="108" textLength="84" lengthAdjust="spacingAndGlyphs">Average True Range</text>
<text x="291" y="126" textLength="84" lengthAdjust="spacingAndGlyphs">Awesome Oscillator</text>
<text x="291" y="151" textLength="28" lengthAdjust="spacingAndGlyphs">トレンド</text>
<text x="293" y="169" font-size="8" textLength="30" lengthAdjust="spacingAndGlyphs">オシレーター</text>
<text x="291" y="188" textLength="35" lengthAdjust="spacingAndGlyphs">ボリューム</text>
<text x="291" y="207" textLength="60" lengthAdjust="spacingAndGlyphs">ビル・ウィリアムス</text>
<text x="291" y="225" textLength="29" lengthAdjust="spacingAndGlyphs">カスタム</text>
</g>
<path d="M459 145.500l3 2.500-3 2.500zM459 164l3 2.500-3 2.500zM459 182.500l3 2.500-3 2.500zM459 201l3 2.500-3 2.500zM459 219l3 2.500-3 2.500z" fill="#222"/>

<!-- menu 3 -->
<rect x="468" y="212" width="159" height="390" fill="#888" opacity=".4"/>
<rect x="466.500" y="210.500" width="158" height="389" fill="#fff" stroke="#a8a8a8"/>
<rect x="467" y="211" width="20" height="388" fill="#f0f0f0"/>
<rect x="468.500" y="212.500" width="154" height="18" fill="#bcd2e6" stroke="#4b9ade"/>
<g class="mt">
<text x="493" y="224.500" textLength="49" lengthAdjust="spacingAndGlyphs">Accelerator</text>
<text x="493" y="243" textLength="59" lengthAdjust="spacingAndGlyphs">Accumulation</text>
<text x="493" y="261.500" textLength="37" lengthAdjust="spacingAndGlyphs">Alligator</text>
<text x="493" y="279.500" textLength="17" lengthAdjust="spacingAndGlyphs">ATR</text>
<text x="493" y="298" textLength="42" lengthAdjust="spacingAndGlyphs">Awesome</text>
<text x="493" y="316.500" textLength="26" lengthAdjust="spacingAndGlyphs">Bands</text>
<text x="493" y="335" textLength="24" lengthAdjust="spacingAndGlyphs">Bears</text>
<text x="493" y="353.500" textLength="21" lengthAdjust="spacingAndGlyphs">Bulls</text>
<text x="493" y="371.500" textLength="14" lengthAdjust="spacingAndGlyphs">CCI</text>
<text x="493" y="390" textLength="109" lengthAdjust="spacingAndGlyphs">Custom Moving Averages</text>
<text x="493" y="408.500" textLength="52" lengthAdjust="spacingAndGlyphs">SimplePanel</text>
<text x="493" y="427" textLength="51" lengthAdjust="spacingAndGlyphs">Heiken Ashi</text>
<text x="493" y="445" textLength="40" lengthAdjust="spacingAndGlyphs">Ichimoku</text>
<text x="493" y="464" textLength="42" lengthAdjust="spacingAndGlyphs">iExposure</text>
<text x="493" y="482" textLength="28" lengthAdjust="spacingAndGlyphs">MACD</text>
<text x="493" y="500.500" textLength="51" lengthAdjust="spacingAndGlyphs">Momentum</text>
<text x="493" y="519" textLength="27" lengthAdjust="spacingAndGlyphs">OsMA</text>
<text x="493" y="537" textLength="40" lengthAdjust="spacingAndGlyphs">Parabolic</text>
<text x="493" y="555.500" textLength="14" lengthAdjust="spacingAndGlyphs">RSI</text>
<text x="493" y="574" textLength="44" lengthAdjust="spacingAndGlyphs">Stochastic</text>
<text x="493" y="592.500" textLength="30" lengthAdjust="spacingAndGlyphs">ZigZag</text>
</g>
</svg>
</body></html>
